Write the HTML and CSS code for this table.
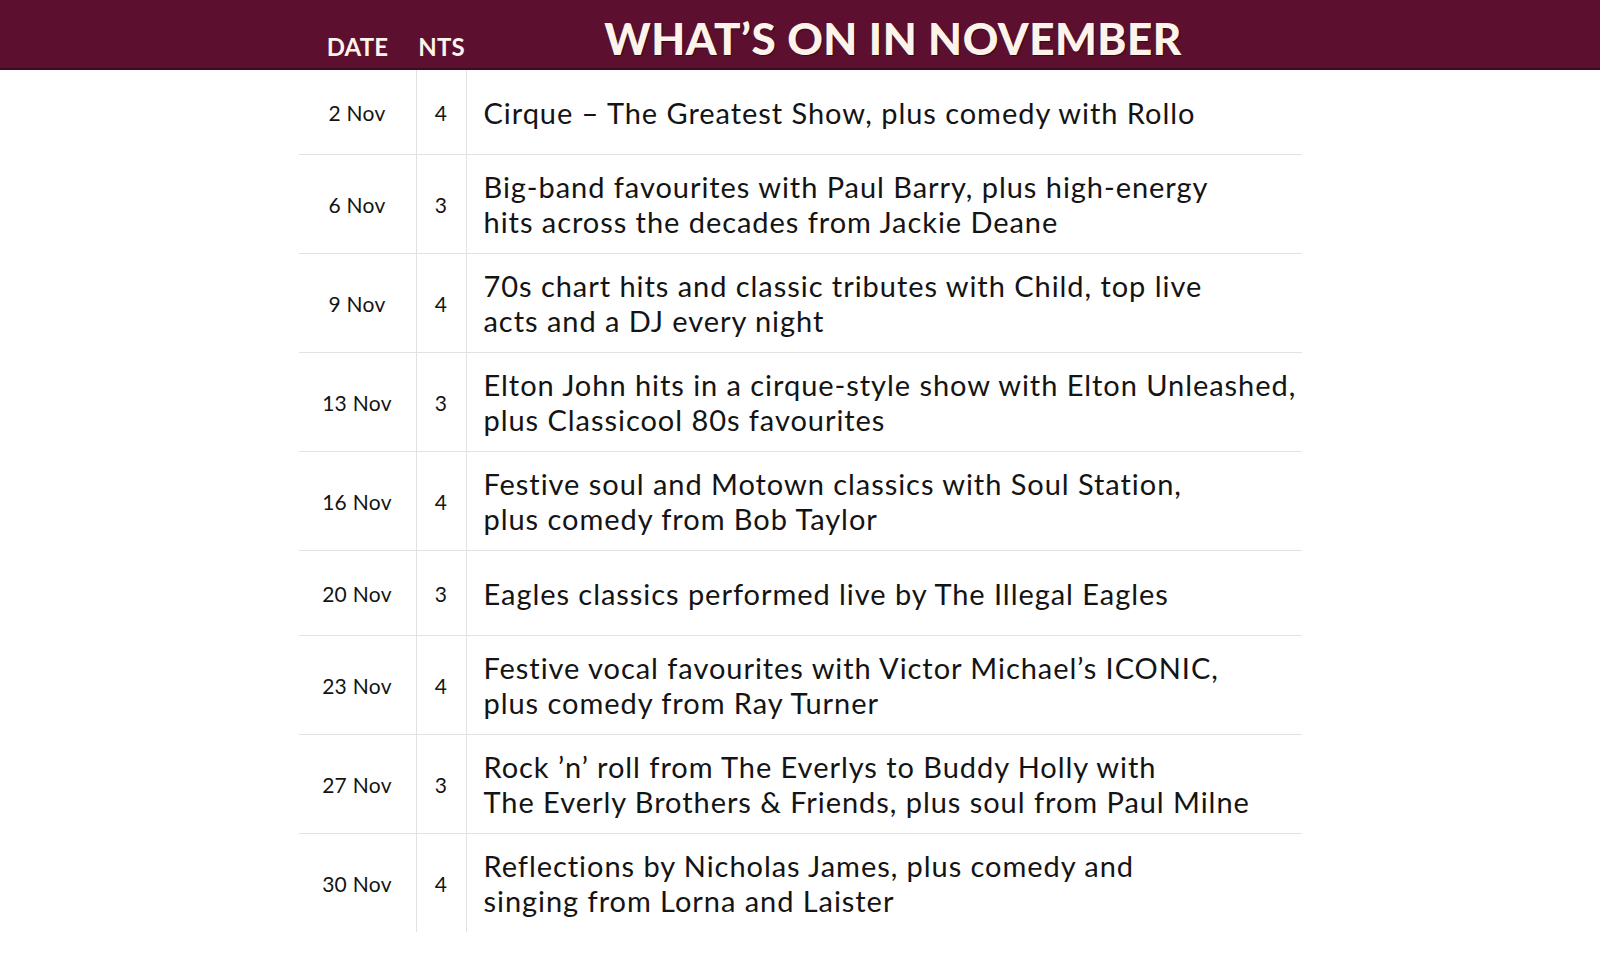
FILE: index.html
```html
<!DOCTYPE html>
<html lang="en">
<head>
<meta charset="utf-8">
<title>What's On in November</title>
<link rel="stylesheet" href="styles.css">
</head>
<body>
<header class="banner">
  <div class="banner-inner">
    <div class="col-date head-label">DATE</div>
    <div class="col-nts head-label">NTS</div>
    <h1 class="title">WHAT’S ON IN NOVEMBER</h1>
  </div>
</header>
<main class="table">
  <div class="row">
    <div class="col-date cell-date">2 Nov</div>
    <div class="col-nts cell-nts">4</div>
    <div class="cell-desc">Cirque – The Greatest Show, plus comedy with Rollo</div>
  </div>
  <div class="row">
    <div class="col-date cell-date">6 Nov</div>
    <div class="col-nts cell-nts">3</div>
    <div class="cell-desc">Big-band favourites with Paul Barry, plus high-energy<br>hits across the decades from Jackie Deane</div>
  </div>
  <div class="row">
    <div class="col-date cell-date">9 Nov</div>
    <div class="col-nts cell-nts">4</div>
    <div class="cell-desc">70s chart hits and classic tributes with Child, top live<br>acts and a DJ every night</div>
  </div>
  <div class="row">
    <div class="col-date cell-date">13 Nov</div>
    <div class="col-nts cell-nts">3</div>
    <div class="cell-desc">Elton John hits in a cirque-style show with Elton Unleashed,<br>plus Classicool 80s favourites</div>
  </div>
  <div class="row">
    <div class="col-date cell-date">16 Nov</div>
    <div class="col-nts cell-nts">4</div>
    <div class="cell-desc">Festive soul and Motown classics with Soul Station,<br>plus comedy from Bob Taylor</div>
  </div>
  <div class="row">
    <div class="col-date cell-date">20 Nov</div>
    <div class="col-nts cell-nts">3</div>
    <div class="cell-desc">Eagles classics performed live by The Illegal Eagles</div>
  </div>
  <div class="row">
    <div class="col-date cell-date">23 Nov</div>
    <div class="col-nts cell-nts">4</div>
    <div class="cell-desc">Festive vocal favourites with Victor Michael’s ICONIC,<br>plus comedy from Ray Turner</div>
  </div>
  <div class="row">
    <div class="col-date cell-date">27 Nov</div>
    <div class="col-nts cell-nts">3</div>
    <div class="cell-desc">Rock ’n’ roll from The Everlys to Buddy Holly with<br>The Everly Brothers &amp; Friends, plus soul from Paul Milne</div>
  </div>
  <div class="row last">
    <div class="col-date cell-date">30 Nov</div>
    <div class="col-nts cell-nts">4</div>
    <div class="cell-desc">Reflections by Nicholas James, plus comedy and<br>singing from Lorna and Laister</div>
  </div>
</main>
</body>
</html>
```

FILE: styles.css
```css
* { box-sizing: border-box; }
html, body {
  margin: 0;
  padding: 0;
  background: #ffffff;
}
body {
  font-family: Lato, "Open Sans", "Liberation Sans", sans-serif;
  color: #141414;
}
.banner {
  background: #5c0f2e;
  height: 70px;
  border-bottom: 2px solid #3e0a1f;
}
.banner-inner {
  width: 1003px;
  margin: 0 auto;
  height: 68px;
  display: flex;
  align-items: baseline;
  padding-top: 12px;
}
.col-date {
  width: 118px;
  flex: 0 0 118px;
  text-align: center;
}
.col-nts {
  width: 50px;
  flex: 0 0 50px;
  text-align: center;
}
.head-label {
  color: #fdf3ea;
  font-weight: 700;
  font-size: 24px;
  letter-spacing: 0.2px;
  position: relative;
  top: 1px;
}
.title {
  margin: 0;
  flex: 1;
  text-align: center;
  padding-left: 18px;
  color: #fdf3ea;
  font-weight: 900;
  font-size: 44px;
  letter-spacing: 0.5px;
  text-shadow: 1px 1px 1px rgba(0,0,0,0.45);
}
.table {
  width: 1003px;
  margin: 0 auto;
}
.row {
  display: flex;
  border-bottom: 1px solid #e2e2e2;
  min-height: 85px;
}
.row.last {
  border-bottom: none;
  min-height: 98px;
}
.cell-date,
.cell-nts {
  display: flex;
  align-items: center;
  justify-content: center;
  font-size: 21px;
  letter-spacing: 0.3px;
  border-right: 1px solid #e2e2e2;
}
.cell-desc {
  flex: 1;
  display: flex;
  align-items: center;
  padding: 14px 0 14px 17px;
  font-size: 29px;
  line-height: 35px;
  letter-spacing: 0.95px;
  white-space: nowrap;
}
```
